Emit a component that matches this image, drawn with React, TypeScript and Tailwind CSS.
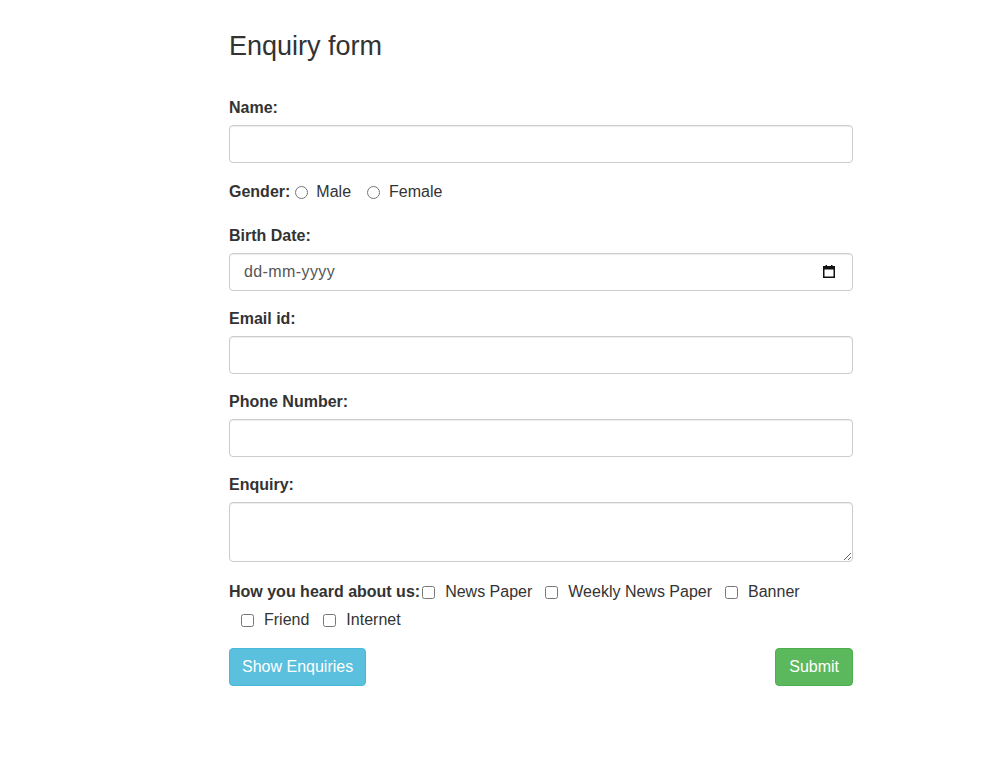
import React from 'react';

const labelCls = 'block font-bold text-[16px] leading-6 pt-[1px] mb-[5px] text-[#333]';
const inputCls =
  'block w-full h-[38px] px-3 border border-[#ccc] rounded-[4px] bg-white text-[16px] text-[#555] outline-none shadow-[inset_0_1px_1px_rgba(0,0,0,0.075)]';

const CalendarIcon: React.FC = () => (
  <svg width="12" height="13" viewBox="0 0 12 13" className="block">
    <rect x="0.75" y="1.75" width="10.5" height="10.5" fill="none" stroke="#111" strokeWidth="1.5" />
    <rect x="0" y="1" width="12" height="3.5" fill="#111" />
    <rect x="2.5" y="0" width="1.5" height="2" fill="#111" />
    <rect x="8" y="0" width="1.5" height="2" fill="#111" />
  </svg>
);

const Check: React.FC<{ label: string; className: string }> = ({ label, className }) => (
  <label className={`flex items-center h-[28px] ${className}`}>
    <input type="checkbox" className="m-0 w-[13px] h-[13px]" />
    <span className="ml-[10px]">{label}</span>
  </label>
);

const App: React.FC = () => {
  return (
    <div
      className="min-h-screen bg-white text-[#333]"
      style={{ fontFamily: '"Liberation Sans", Arial, Helvetica, sans-serif' }}
    >
      <div className="pl-[229px] pt-[31px]">
        <div className="w-[624px]">
          <h3 className="text-[27px] leading-[30px] font-normal text-[#333]">Enquiry form</h3>

          <form className="mt-[34px]" onSubmit={(e) => e.preventDefault()}>
            <div className="mb-[15px]">
              <label className={labelCls}>Name:</label>
              <input type="text" className={inputCls} />
            </div>

            <div className="flex items-center h-[27px] pt-[1px] mb-[18px] text-[16px]">
              <span className="font-bold">Gender:</span>
              <input type="radio" name="gender" className="m-0 ml-[5px] w-[13px] h-[13px]" />
              <span className="ml-[8px]">Male</span>
              <input type="radio" name="gender" className="m-0 ml-4 w-[13px] h-[13px]" />
              <span className="ml-[9px]">Female</span>
            </div>

            <div className="mb-[15px]">
              <label className={labelCls}>Birth Date:</label>
              <div className="relative">
                <input
                  type="text"
                  readOnly
                  value="dd-mm-yyyy"
                  className={`${inputCls} pl-[14px] tracking-[0.4px]`}
                />
                <span className="absolute right-[18px] top-[12px] pointer-events-none">
                  <CalendarIcon />
                </span>
              </div>
            </div>

            <div className="mb-[15px]">
              <label className={labelCls}>Email id:</label>
              <input type="email" className={inputCls} />
            </div>

            <div className="mb-[15px]">
              <label className={labelCls}>Phone Number:</label>
              <input type="text" className={inputCls} />
            </div>

            <div className="mb-[15px]">
              <label className={labelCls}>Enquiry:</label>
              <textarea
                className="block w-full h-[60px] px-3 py-[6px] border border-[#ccc] rounded-[4px] bg-white text-[16px] text-[#555] outline-none resize-y shadow-[inset_0_1px_1px_rgba(0,0,0,0.075)]"
              />
            </div>

            <div className="flex flex-wrap items-center pt-[1px] mb-[14px] text-[16px]">
              <span className="font-bold h-[28px] leading-[28px]">How you heard about us:</span>
              <Check label="News Paper" className="ml-[2px]" />
              <Check label="Weekly News Paper" className="ml-[13px]" />
              <Check label="Banner" className="ml-[13px]" />
              <Check label="Friend" className="ml-3" />
              <Check label="Internet" className="ml-[14px]" />
            </div>

            <div className="flex justify-between">
              <button
                type="button"
                className="h-[38px] px-3 rounded-[4px] bg-[#5bc0de] border border-[#46b8da] text-white text-[16px]"
              >
                Show Enquiries
              </button>
              <button
                type="submit"
                className="h-[38px] px-[13px] rounded-[4px] bg-[#5cb85c] border border-[#4cae4c] text-white text-[16px]"
              >
                Submit
              </button>
            </div>
          </form>
        </div>
      </div>
    </div>
  );
};

export default App;
